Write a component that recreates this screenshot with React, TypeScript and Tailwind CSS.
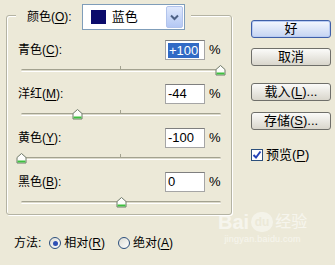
import React from "react";

// Channel rows for the colour mixer
interface Channel {
  label: string;
  key: string;
  value: number;
  selected?: boolean;
}

const channels: Channel[] = [
  { label: "青色", key: "C", value: 100, selected: true },
  { label: "洋红", key: "M", value: -44 },
  { label: "黄色", key: "Y", value: -100 },
  { label: "黑色", key: "B", value: 0 },
];

const font = { fontFamily: '"Liberation Sans", "Noto Sans CJK SC", sans-serif' };

// Label with underlined mnemonic, e.g. 青色(C):
const Mnemonic = ({ text, k, colon = false }: { text: string; k: string; colon?: boolean }) => (
  <span>
    {text}(<span className="underline underline-offset-2">{k}</span>){colon ? ":" : ""}
  </span>
);

const Thumb = () => (
  <svg width="11" height="11" viewBox="0 0 11 11">
    <path d="M1 4.5 L5.5 0.5 L10 4.5 V10 H1 Z" fill="#fdfdfb" stroke="#6f7a6a" strokeWidth="1" />
    <rect x="1.5" y="7.5" width="8" height="2" fill="#3fbf3f" />
  </svg>
);

const Slider = ({ value }: { value: number }) => {
  // track spans x 0..199 inside the row
  const pos = ((value + 100) / 200) * 199;
  return (
    <div className="relative h-[24px] ml-[14px] w-[200px]">
      <div className="absolute top-[9px] left-0 right-0 h-[3px] rounded-full border-t border-[#a3a290] border-b border-b-white bg-[#dcdacb]" />
      <div className="absolute top-[6px] left-[99px] w-px h-[3px] bg-[#a3a290]" />
      <div className="absolute top-[5px]" style={{ left: pos - 5 }}>
        <Thumb />
      </div>
    </div>
  );
};

const XpButton = ({ children, primary = false }: { children: React.ReactNode; primary?: boolean }) => (
  <div
    className={
      primary
        ? "w-[80px] h-[18px] flex items-center justify-center rounded-[3px] border border-[#3f5fa8] bg-gradient-to-b from-[#f4f7fe] to-[#c5d4f2] shadow-[inset_0_0_0_1px_#b9ccf3] text-[13px] text-black"
        : "w-[80px] h-[18px] flex items-center justify-center rounded-[3px] border border-[#6f6f6a] bg-gradient-to-b from-[#fbfbf9] to-[#d9d6cc] text-[13px] text-black"
    }
  >
    {children}
  </div>
);

const Radio = ({ checked = false }: { checked?: boolean }) => (
  <span className="w-[12px] h-[12px] rounded-full border border-[#2c4f7c] bg-gradient-to-br from-[#dcdcd4] to-white flex items-center justify-center">
    {checked && <span className="w-[5px] h-[5px] rounded-full bg-[#2e4fb5]" />}
  </span>
);

export default function App() {
  return (
    <div className="relative w-[335px] h-[265px] bg-[#ece9d8] text-[12px] text-black flex overflow-hidden" style={font}>
      {/* left column */}
      <div className="w-[240px] flex flex-col">
        <div className="relative mt-[15px] ml-[6px] w-[226px] h-[200px] border border-[#b4b3a3] rounded-[3px] shadow-[inset_1px_1px_0_#fff,1px_1px_0_#fff] pt-[24px]">
          {/* legend: colour selector sits over the top border */}
          <div className="absolute -top-[12px] left-[9px] w-[175px] h-[26px] bg-[#ece9d8] flex items-center">
            <span className="ml-[11px]">
              颜色(<span className="underline underline-offset-2">O</span>):
            </span>
            <div className="ml-[10px] w-[103px] h-[26px] border border-[#7f9db9] bg-white flex items-center">
              <span className="ml-[8px] w-[15px] h-[14px] bg-[#0b0b6b]" />
              <span className="ml-[6px] text-[13px] flex-1">蓝色</span>
              <span className="mr-[1px] w-[17px] h-[22px] rounded-[2px] border border-[#b2c4ec] bg-gradient-to-b from-[#dfe8fc] to-[#b4c8f4] flex items-center justify-center">
                <svg width="9" height="7" viewBox="0 0 9 7">
                  <path d="M1 1.5 L4.5 5 L8 1.5" fill="none" stroke="#4d6185" strokeWidth="2" />
                </svg>
              </span>
            </div>
          </div>

          {channels.map((c) => (
            <div key={c.key}>
              <div className="flex items-center h-[20px]">
                <span className="w-[158px] pl-[11px]">
                  <Mnemonic text={c.label} k={c.key} colon />
                </span>
                <div className="w-[40px] h-[20px] border border-[#a5a5a5] border-t-[#7f7f7f] bg-white flex items-center pl-[2px]">
                  {c.selected ? (
                    <span className="bg-[#316ac5] text-white px-px leading-[15px] text-[13px]">+{c.value}</span>
                  ) : (
                    <span className="text-[13px]">{c.value}</span>
                  )}
                </div>
                <span className="ml-[4px] text-[13px]">%</span>
              </div>
              <Slider value={c.value} />
            </div>
          ))}
        </div>

        <div className="mt-[18px] ml-[14px] h-[20px] flex items-center">
          <span>方法:</span>
          <span className="ml-[8px]">
            <Radio checked />
          </span>
          <span className="ml-[3px]">
            相对(<span className="underline underline-offset-2">R</span>)
          </span>
          <span className="ml-[13px]">
            <Radio />
          </span>
          <span className="ml-[3px]">
            绝对(<span className="underline underline-offset-2">A</span>)
          </span>
        </div>
      </div>

      {/* right column */}
      <div className="ml-[11px] pt-[20px] flex flex-col">
        <XpButton primary>好</XpButton>
        <div className="mt-[10px]">
          <XpButton>取消</XpButton>
        </div>
        <div className="mt-[17px]">
          <XpButton>
            <Mnemonic text="载入" k="L" />...
          </XpButton>
        </div>
        <div className="mt-[11px]">
          <XpButton>
            <Mnemonic text="存储" k="S" />...
          </XpButton>
        </div>
        <div className="mt-[15px] flex items-center">
          <span className="w-[12px] h-[12px] border border-[#2c4f7c] bg-white flex items-center justify-center">
            <svg width="10" height="10" viewBox="0 0 10 10">
              <path d="M1.5 5 L4 7.5 L8.5 1.5" fill="none" stroke="#2443b8" strokeWidth="2" />
            </svg>
          </span>
          <span className="ml-[3px] text-[13px]">
            <Mnemonic text="预览" k="P" />
          </span>
        </div>
      </div>

      {/* Baidu jingyan watermark */}
      <div className="absolute left-[218px] top-[212px] flex flex-col items-center text-white/55 pointer-events-none">
        <div className="flex items-center gap-[2px]">
          <span className="text-[20px] font-bold leading-none">Bai</span>
          <span className="w-[22px] h-[20px] rounded-full bg-white/45 text-[#ece9d8] text-[12px] font-bold flex items-center justify-center leading-none">du</span>
          <span className="text-[16px] leading-none">经验</span>
        </div>
        <span className="text-[9px] leading-none mt-[3px] tracking-wide">jingyan.baidu.com</span>
      </div>
    </div>
  );
}
